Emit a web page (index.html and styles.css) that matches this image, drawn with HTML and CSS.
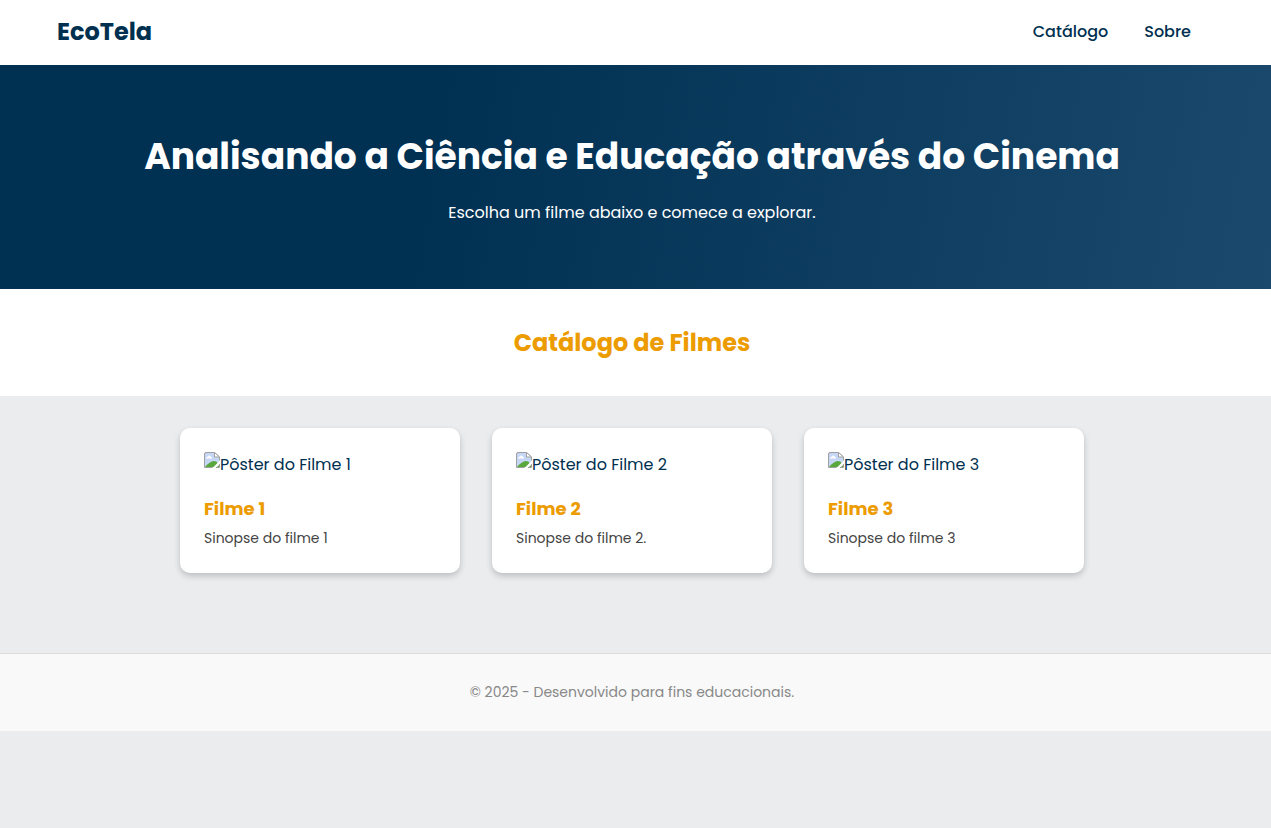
FILE: index.html
```
<!DOCTYPE html>
<html lang="pt-BR">
<head>
<meta charset="UTF-8">
<meta name="viewport" content="width=device-width, initial-scale=1">
<title>EcoTela</title>
<link rel="stylesheet" href="styles.css">
</head>
<body>
<svg class="symbols" aria-hidden="true">
  <symbol id="broken" viewBox="0 0 16 16">
    <path d="M.5 15.500V2Q.5.5 2 .5H10.500L15.500 5V15.500Z" fill="#c6d7f5"/>
    <path d="M2 6.500Q2 4.500 4 4.500Q5 2.500 6.500 4.500Q8 4.500 8 6.500Z" fill="#fff"/>
    <path d="M1 15Q3 12 6 10.500Q9 8 12 9.500L15 12V15Z" fill="#58a83d"/>
    <path d="M8.500 16L16 8.500V12L12 16Z" fill="#fff"/>
    <path d="M8.500 15.500H.5V2Q.5.5 2 .5H10.500L15.500 5V8.500M12 15.500H15.500V12" fill="none" stroke="#a0a0a0"/>
    <path d="M10.500 .5V5H15.500Z" fill="#fff" stroke="#a0a0a0"/>
  </symbol>
</svg>
<header class="header">
  <div class="logo">EcoTela</div>
  <nav class="nav">
    <a href="#catalogo">Catálogo</a>
    <a href="#sobre">Sobre</a>
  </nav>
</header>
<section class="hero">
  <h1 class="hero-title">Analisando a Ciência e Educação através do Cinema</h1>
  <p class="hero-text">Escolha um filme abaixo e comece a explorar.</p>
</section>
<h2 class="catalog-title" id="catalogo">Catálogo de Filmes</h2>
<main class="catalog">
  <article class="card">
    <div class="poster"><svg class="poster-icon" aria-hidden="true"><use href="#broken"/></svg><span>Pôster do Filme 1</span></div>
    <h3 class="card-title">Filme 1</h3>
    <p class="card-text">Sinopse do filme 1</p>
  </article>
  <article class="card">
    <div class="poster"><svg class="poster-icon" aria-hidden="true"><use href="#broken"/></svg><span>Pôster do Filme 2</span></div>
    <h3 class="card-title">Filme 2</h3>
    <p class="card-text">Sinopse do filme 2.</p>
  </article>
  <article class="card">
    <div class="poster"><svg class="poster-icon" aria-hidden="true"><use href="#broken"/></svg><span>Pôster do Filme 3</span></div>
    <h3 class="card-title">Filme 3</h3>
    <p class="card-text">Sinopse do filme 3</p>
  </article>
</main>
<footer class="footer" id="sobre">
  <p>© 2025 - Desenvolvido para fins educacionais.</p>
</footer>
</body>
</html>
```
FILE: styles.css
```
* { box-sizing: border-box; margin: 0; padding: 0; }
:root { --gutter: 7px; --navy: #003050; --gold: #ec9b00; }
body {
  font-family: Poppins, Inter, "Open Sans", sans-serif;
  font-size: 16px;
  line-height: 24px;
  color: var(--navy);
  background: #ebecee;
}
.symbols { display: none; }
.header {
  display: flex;
  justify-content: space-between;
  align-items: center;
  padding: 14px 80px 15px 57px;
  background: #fff;
}
.logo { font-size: 24px; line-height: 36px; font-weight: 700; }
.nav { display: flex; gap: 36px; }
.nav a { color: inherit; font-weight: 500; text-decoration: none; }
.hero {
  padding: 64px var(--gutter) 64px 0;
  text-align: center;
  color: #fff;
  background: linear-gradient(100deg, #003052 34%, #1a496d);
}
.hero-title { margin-bottom: 16px; font-size: 36px; line-height: 56px; font-weight: 700; }
.hero-text { font-size: 16px; line-height: 24px; }
.catalog-title {
  padding: 36px var(--gutter) 35px 0;
  font-size: 24px;
  line-height: 36px;
  font-weight: 700;
  text-align: center;
  color: var(--gold);
  background: #fff;
}
.catalog {
  display: grid;
  grid-template-columns: repeat(auto-fit, 280px);
  justify-content: center;
  gap: 32px;
  padding: 32px var(--gutter) 80px 0;
}
.card {
  padding: 24px;
  background: #fff;
  border-radius: 10px;
  box-shadow: 0 3px 6px rgba(0, 0, 0, .2);
}
.poster { display: flex; align-items: flex-start; margin-bottom: 17px; line-height: 26px; }
.poster-icon { width: 16px; height: 16px; flex: none; }
.card-title { margin-bottom: 4px; font-size: 18px; line-height: 28px; font-weight: 700; color: var(--gold); }
.card-text { font-size: 14px; line-height: 22px; color: #444; }
.footer {
  padding: 27px var(--gutter) 28px 0;
  font-size: 14px;
  line-height: 22px;
  text-align: center;
  color: #888;
  background: #f9f9f9;
  border-top: 1px solid #ddd;
}
```
